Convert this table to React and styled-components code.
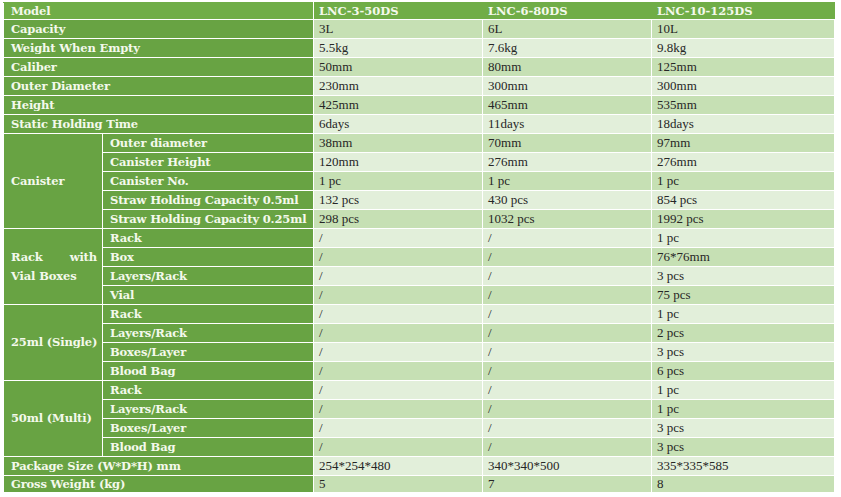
import React from 'react';
import styled, { createGlobalStyle } from 'styled-components';

const GlobalStyle = createGlobalStyle`
    body {
        margin: 0;
        background: #fff;
    }
`;

const Page = styled.div`
    padding: 2px 0 0 3px;
`;

const SpecTable = styled.table`
    border-collapse: collapse;
    table-layout: fixed;
    width: 831px;
`;

const Row = styled.tr`
    height: ${props => props.h || 19}px;
`;

const LabelCell = styled.td`
    background-color: ${props => props.header ? '#70ad47' : '#68a343'};
    color: #f4f9ec;
    font-family: "DejaVu Serif", serif;
    font-weight: bold;
    font-size: 11.5px;
    letter-spacing: -0.15px;
    line-height: 16px;
    padding: 0 5px 0 7px;
    border: 1px solid #fff;
    border-top-color: ${props => props.header ? '#70ad47' : '#fff'};
    white-space: nowrap;
    vertical-align: middle;
    text-align: left;
`;

const GroupCell = styled(LabelCell)`
    line-height: 19px;
`;

const SpreadLine = styled.div`
    display: flex;
    justify-content: space-between;
`;

const HeadCell = styled.td`
    background-color: #70ad47;
    color: #f4f9ec;
    font-family: "DejaVu Serif", serif;
    font-weight: bold;
    font-size: 11.5px;
    line-height: 16px;
    padding: 0 5px;
    border: 1px solid #70ad47;
    border-bottom-color: #fff;
    white-space: nowrap;
`;

const ValueCell = styled.td`
    background-color: ${props => props.dark ? '#c6e0b4' : '#e2efda'};
    color: #262626;
    font-family: "Liberation Serif", serif;
    font-size: 13px;
    line-height: 16px;
    padding: 0 5px;
    border: 1px solid #fff;
    white-space: nowrap;
`;

const rows = [
    { label: 'Capacity', v: ['3L', '6L', '10L'] },
    { label: 'Weight When Empty', v: ['5.5kg', '7.6kg', '9.8kg'] },
    { label: 'Caliber', v: ['50mm', '80mm', '125mm'] },
    { label: 'Outer Diameter', v: ['230mm', '300mm', '300mm'] },
    { label: 'Height', v: ['425mm', '465mm', '535mm'] },
    { label: 'Static Holding Time', v: ['6days', '11days', '18days'] },
    { group: 'Canister', span: 5, sub: 'Outer diameter', v: ['38mm', '70mm', '97mm'] },
    { sub: 'Canister Height', v: ['120mm', '276mm', '276mm'] },
    { sub: 'Canister No.', v: ['1 pc', '1 pc', '1 pc'] },
    { sub: 'Straw Holding Capacity 0.5ml', v: ['132 pcs', '430 pcs', '854 pcs'] },
    { sub: 'Straw Holding Capacity 0.25ml', v: ['298 pcs', '1032 pcs', '1992 pcs'] },
    { group: 'rack', span: 4, sub: 'Rack', v: ['/', '/', '1 pc'] },
    { sub: 'Box', v: ['/', '/', '76*76mm'] },
    { sub: 'Layers/Rack', v: ['/', '/', '3 pcs'] },
    { sub: 'Vial', v: ['/', '/', '75 pcs'] },
    { group: '25ml (Single)', span: 4, sub: 'Rack', v: ['/', '/', '1 pc'] },
    { sub: 'Layers/Rack', v: ['/', '/', '2 pcs'] },
    { sub: 'Boxes/Layer', v: ['/', '/', '3 pcs'] },
    { sub: 'Blood Bag', v: ['/', '/', '6 pcs'] },
    { group: '50ml (Multi)', span: 4, sub: 'Rack', v: ['/', '/', '1 pc'] },
    { sub: 'Layers/Rack', v: ['/', '/', '1 pc'] },
    { sub: 'Boxes/Layer', v: ['/', '/', '3 pcs'] },
    { sub: 'Blood Bag', v: ['/', '/', '3 pcs'] },
    { label: 'Package Size (W*D*H) mm', v: ['254*254*480', '340*340*500', '335*335*585'] },
    { label: 'Gross Weight (kg)', v: ['5', '7', '8'] },
];

function GroupLabel({ name }) {
    if (name === 'rack') {
        return (
            <>
                <SpreadLine><span>Rack</span><span>with</span></SpreadLine>
                <div>Vial Boxes</div>
            </>
        );
    }
    return name;
}

export default function App() {
    return (
        <Page>
            <GlobalStyle />
            <SpecTable>
                <colgroup>
                    <col style={{ width: 99 }} />
                    <col style={{ width: 211 }} />
                    <col style={{ width: 169 }} />
                    <col style={{ width: 169 }} />
                    <col style={{ width: 183 }} />
                </colgroup>
                <tbody>
                    <Row h={17}>
                        <LabelCell header colSpan={2}>Model</LabelCell>
                        <HeadCell>LNC-3-50DS</HeadCell>
                        <HeadCell>LNC-6-80DS</HeadCell>
                        <HeadCell>LNC-10-125DS</HeadCell>
                    </Row>
                    {rows.map((r, i) => (
                        <Row key={i} h={i === rows.length - 1 ? 16 : 19}>
                            {r.label && <LabelCell colSpan={2}>{r.label}</LabelCell>}
                            {r.group && (
                                <GroupCell rowSpan={r.span}>
                                    <GroupLabel name={r.group} />
                                </GroupCell>
                            )}
                            {r.sub && <LabelCell>{r.sub}</LabelCell>}
                            {r.v.map((val, j) => (
                                <ValueCell key={j} dark={i % 2 === 0}>{val}</ValueCell>
                            ))}
                        </Row>
                    ))}
                </tbody>
            </SpecTable>
        </Page>
    );
}
